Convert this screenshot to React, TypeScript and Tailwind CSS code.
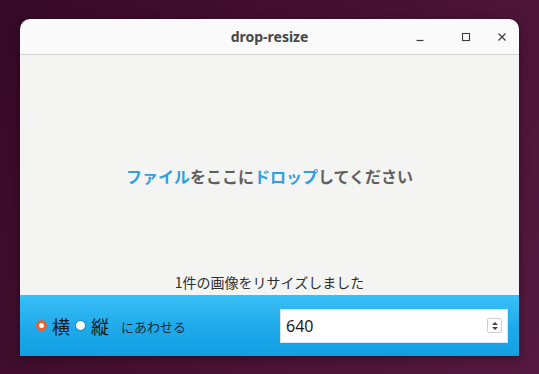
import { FC } from 'react';

const jp = "font-['Noto_Sans_CJK_JP','Noto_Sans',sans-serif]";

const TitleBar: FC = () => (
  <div className="relative flex h-[36px] items-center justify-center rounded-t-[10px] border-b border-[#d4d4d2] bg-[#fafafa]">
    <span className="font-['Noto_Sans',sans-serif] text-[14px] font-bold text-[#474747]">drop-resize</span>
    <div className="absolute right-[10px] top-0 flex h-full items-center text-[#3c3c3c]">
      <svg width="14" height="14" viewBox="0 0 14 14">
        <line x1="3.5" y1="10.5" x2="10.5" y2="10.5" stroke="currentColor" strokeWidth="1.2" />
      </svg>
      <svg width="14" height="14" viewBox="0 0 14 14" className="ml-[32px]">
        <rect x="3.5" y="3.5" width="7" height="7" fill="none" stroke="currentColor" strokeWidth="1.1" />
      </svg>
      <svg width="14" height="14" viewBox="0 0 14 14" className="ml-[22px]">
        <path d="M3.5 3.5 L10.5 10.5 M10.5 3.5 L3.5 10.5" stroke="currentColor" strokeWidth="1.2" />
      </svg>
    </div>
  </div>
);

const Radio: FC<{ checked: boolean; label: string }> = ({ checked, label }) => (
  <label className="flex items-center gap-[5px]">
    {checked ? (
      <span className="flex h-[11px] w-[11px] items-center justify-center rounded-full bg-[#ee5d2a]">
        <span className="h-[5px] w-[5px] rounded-full bg-white" />
      </span>
    ) : (
      <span className="h-[11px] w-[11px] rounded-full border-[1.5px] border-[#1582b8] bg-white" />
    )}
    <span className="text-[18px] leading-none text-[#1a1a1a]">{label}</span>
  </label>
);

const App: FC = () => {
  return (
    <div className={`h-[374px] w-[539px] overflow-hidden bg-[linear-gradient(120deg,#350927_0%,#45102f_45%,#55193f_100%)] pl-[20px] pt-[19px] ${jp}`}>
      <div className="flex w-[499px] flex-col shadow-[0_2px_10px_rgba(0,0,0,0.35)] rounded-t-[10px]">
        <TitleBar />
        <div className="flex h-[240px] flex-col bg-[#f4f4f2]">
          <div className="flex flex-1 items-center justify-center pt-[24px]">
            <p className="text-[16px] font-bold text-[#606060]">
              <span className="text-[#2e9fe2]">ファイル</span>をここに
              <span className="text-[#2e9fe2]">ドロップ</span>してください
            </p>
          </div>
          <p className="pb-[4px] text-center text-[14px] leading-[18px] text-[#2e2e2e]">1件の画像をリサイズしました</p>
        </div>
        <div className="flex h-[61px] items-center bg-[linear-gradient(180deg,#3ac0f9_0%,#1fa9ea_55%,#10a0e2_100%)] pl-[16px] pr-[11px]">
          <div className="flex items-center gap-[5px]">
            <Radio checked label="横" />
            <Radio checked={false} label="縦" />
          </div>
          <span className="ml-[12px] mt-[3px] text-[13px] text-[#1d2b35]">にあわせる</span>
          <div className="ml-auto flex h-[34px] w-[228px] items-center border border-[#d6e6ee] bg-white pl-[5px] pr-[5px]">
            <span className="font-['Noto_Sans',sans-serif] text-[16px] text-[#1c1c1c]">640</span>
            <div className="ml-auto flex h-[15px] w-[15px] flex-col items-center justify-center gap-[2px] rounded-[2px] border border-[#d2d2d2]">
              <svg width="6" height="3" viewBox="0 0 6 3"><path d="M0 3 L3 0 L6 3Z" fill="#444" /></svg>
              <svg width="6" height="3" viewBox="0 0 6 3"><path d="M0 0 L3 3 L6 0Z" fill="#444" /></svg>
            </div>
          </div>
        </div>
      </div>
    </div>
  );
};

export default App;
